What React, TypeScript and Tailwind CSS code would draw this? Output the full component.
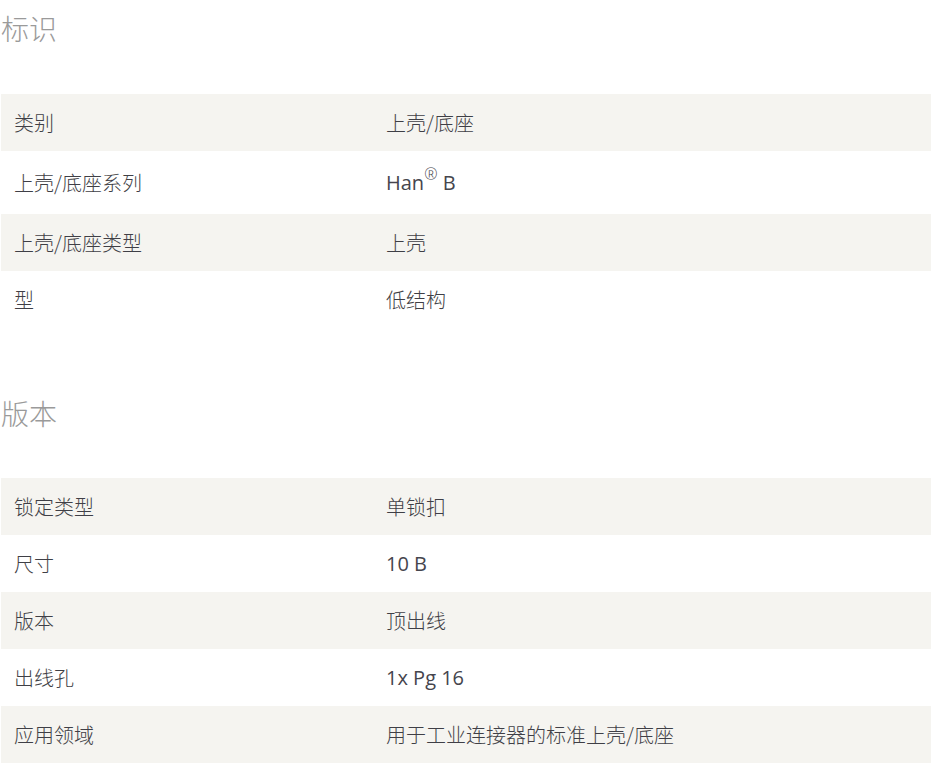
import React from 'react'

type Row = { label: string; value: React.ReactNode; tall?: boolean }

const latin = 'font-["Open_Sans"] font-normal text-[#45454d]'

const identRows: Row[] = [
  { label: '类别', value: '上壳/底座' },
  {
    label: '上壳/底座系列',
    value: (
      <span className={latin}>
        Han<sup className="text-[16px] font-light -top-[0.6em]">®</sup> B
      </span>
    ),
    tall: true,
  },
  { label: '上壳/底座类型', value: '上壳' },
  { label: '型', value: '低结构' },
]

const versionRows: Row[] = [
  { label: '锁定类型', value: '单锁扣' },
  { label: '尺寸', value: <span className={latin}>10 B</span> },
  { label: '版本', value: '顶出线' },
  { label: '出线孔', value: <span className={latin}>1x Pg 16</span> },
  { label: '应用领域', value: '用于工业连接器的标准上壳/底座' },
]

function SpecTable({ rows }: { rows: Row[] }) {
  return (
    <div className="flex flex-col">
      {rows.map((r, i) => (
        <div
          key={r.label}
          className={`grid grid-cols-[372px_1fr] items-center ${r.tall ? 'h-[63px]' : 'h-[57px]'} ${
            i % 2 === 0 ? 'bg-[#f5f4f0]' : 'bg-white'
          }`}
        >
          <div className="pl-[13px]">{r.label}</div>
          <div className="pl-[13px]">{r.value}</div>
        </div>
      ))}
    </div>
  )
}

export default function App() {
  return (
    <div className='w-[931px] bg-white pl-px font-["Noto_Sans_CJK_SC",sans-serif] font-light text-[20px] text-[#3f3f46]'>
      <h2 className="mt-2 mb-[46px] h-10 text-[28px] leading-10 text-[#9a9a9a] font-light">标识</h2>
      <SpecTable rows={identRows} />

      <h2 className="mt-[65px] mb-[45px] h-10 text-[28px] leading-10 text-[#9a9a9a] font-light">版本</h2>
      <SpecTable rows={versionRows} />
    </div>
  )
}
